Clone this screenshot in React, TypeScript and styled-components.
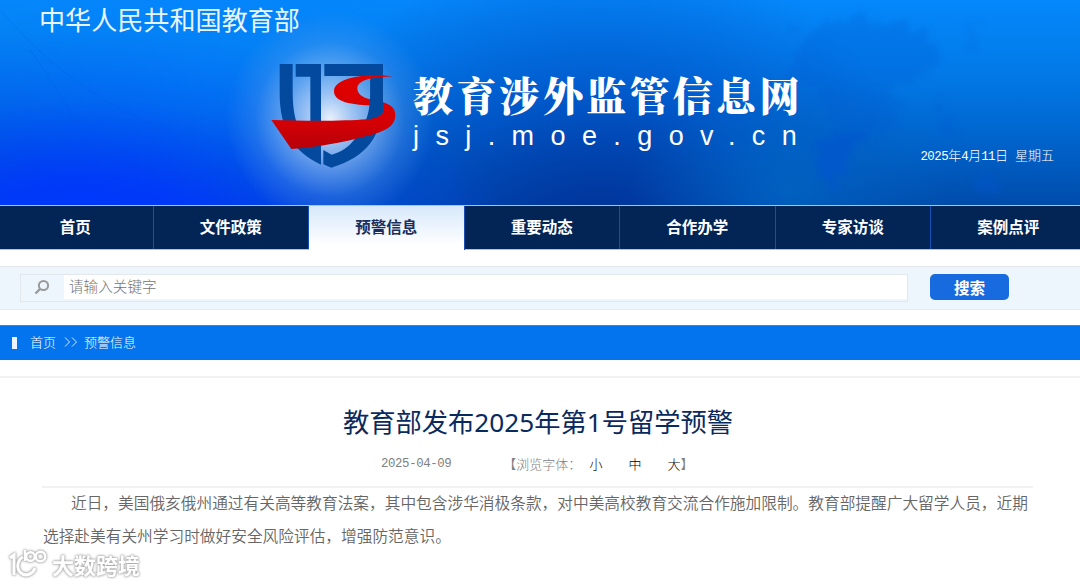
import * as React from "react";
import styled, { createGlobalStyle, css } from "styled-components";

const GlobalStyle = createGlobalStyle`
  * {
    box-sizing: border-box;
  }
  body {
    margin: 0;
    background: #ffffff;
    font-family: "Noto Sans CJK SC", sans-serif;
    overflow: hidden;
  }
`;

const Page = styled.div`
  width: 1080px;
  height: 585px;
  overflow: hidden;
  background: #ffffff;
`;

const Header = styled.header`
  position: relative;
  height: 205px;
  padding: 0 26px 0 39px;
  background:
    radial-gradient(
      ellipse 104px 108px at 330px 119px,
      rgba(245, 248, 252, 0.95) 0%,
      rgba(205, 223, 248, 0.8) 20%,
      rgba(150, 190, 240, 0.6) 45%,
      rgba(100, 160, 235, 0.28) 72%,
      rgba(60, 130, 230, 0) 100%
    ),
    radial-gradient(
      ellipse 440px 230px at 80px 260px,
      #0034ff 0%,
      rgba(0, 56, 255, 0.9) 35%,
      rgba(0, 80, 255, 0.4) 70%,
      rgba(0, 90, 255, 0) 100%
    ),
    radial-gradient(
      ellipse 160px 120px at 790px 190px,
      rgba(0, 112, 200, 0.6) 0%,
      rgba(0, 104, 196, 0) 100%
    ),
    radial-gradient(
      ellipse 330px 290px at 600px 235px,
      rgba(0, 46, 148, 0.85) 0%,
      rgba(0, 60, 180, 0.45) 50%,
      rgba(0, 80, 220, 0) 100%
    ),
    radial-gradient(
      ellipse 300px 160px at 200px 60px,
      rgba(4, 130, 250, 0.7) 0%,
      rgba(4, 130, 250, 0) 100%
    ),
    linear-gradient(to bottom, #0488fb 0%, #027ae8 35%, #0064cc 68%, #004cab 100%);
`;

const HeaderMap = styled.svg`
  position: absolute;
  inset: 0;
`;

const Ministry = styled.div`
  position: relative;
  height: 40px;
  line-height: 39px;
  font-size: 26.1px;
  color: #e8f5ff;
`;

const BrandRow = styled.div`
  position: relative;
  display: flex;
  margin-left: 211px;
  height: 150px;
`;

const BrandText = styled.div`
  margin: 27px 0 0 -17px;
  color: #ffffff;
  white-space: nowrap;
`;

const SiteName = styled.div`
  height: 52px;
  line-height: 54px;
  font-family: "Noto Serif CJK SC", "Noto Sans CJK SC", serif;
  font-size: 40px;
  font-weight: 900;
  letter-spacing: 3.3px;
`;

const SiteUrl = styled.div`
  height: 34px;
  line-height: 34px;
  font-family: "Liberation Sans", sans-serif;
  font-size: 27px;
  letter-spacing: 16.4px;
`;

const Digits = styled.span<{ $gap?: number }>`
  font-family: "Liberation Mono", monospace;
  font-size: 12.4px;
  letter-spacing: ${({ $gap = -0.5 }) => $gap}px;
`;

const Today = styled.div`
  margin-left: auto;
  align-self: flex-end;
  margin-bottom: 25px;
  height: 20px;
  line-height: 20px;
  font-size: 13px;
  font-weight: 300;
  color: #ffffff;
  white-space: pre;
`;

const Nav = styled.nav`
  display: flex;
  height: 45px;
  padding-top: 1px;
  background: #a9c4ea;
  overflow: hidden;
`;

const NavItem = styled.a<{ $active?: boolean }>`
  flex: 0 0 155.5px;
  height: 43px;
  line-height: 41px;
  text-align: center;
  font-size: 15.5px;
  font-weight: 700;
  color: #ffffff;
  background: #022556;
  border-right: 1px solid #1450b4;

  &:first-child {
    margin-left: -2px;
  }

  ${({ $active }) =>
    $active &&
    css`
      height: 44px;
      color: #1b2f5e;
      background: linear-gradient(to bottom, #d7e8fa, #ffffff 90%);
    `}
`;

const SearchBar = styled.div`
  display: flex;
  align-items: flex-start;
  margin-top: 16px;
  height: 44px;
  padding: 7px 0 0 20px;
  background: #edf5fd;
  border-top: 1px solid #e2e6ea;
  border-bottom: 1px solid #e6eaee;
`;

const SearchField = styled.div`
  display: flex;
  width: 888px;
  height: 28px;
  border: 1px solid #e3e8ed;
`;

const SearchIconCell = styled.div`
  display: flex;
  align-items: center;
  justify-content: center;
  width: 43px;
  padding: 0 2px 2px 0;
`;

const SearchInput = styled.div`
  flex: 1;
  height: 24px;
  padding-left: 5px;
  line-height: 22px;
  font-size: 14.6px;
  font-weight: 300;
  color: #757575;
  background: #ffffff;
`;

const SearchButton = styled.button`
  width: 79px;
  height: 26px;
  margin-left: 22px;
  padding: 0;
  border: none;
  border-radius: 5px;
  background: #176bdf;
  color: #ffffff;
  font-family: inherit;
  font-size: 15.6px;
  font-weight: 700;
  line-height: 26px;
`;

const Breadcrumb = styled.div`
  display: flex;
  align-items: center;
  height: 35px;
  margin-top: 15px;
  padding: 0 0 3px 12px;
  background: #0373ee;
  border-top: 1px solid #2f86e6;
  color: #ffffff;
  font-size: 13px;
  font-weight: 300;
`;

const Marker = styled.i`
  width: 5px;
  height: 12px;
  margin: 2px 13px 0 0;
  background: #eaf5ff;
`;

const Arrows = styled.svg`
  margin: 1px 6px 0 8px;
`;

const Article = styled.article`
  margin-top: 16px;
  padding: 0 46px 0 42px;
  border-top: 2px solid #f1f1f1;
`;

const Title = styled.h1`
  height: 50px;
  margin: 19px 0 0;
  line-height: 50px;
  text-align: center;
  font-family: "Noto Sans", "Noto Sans CJK SC", sans-serif;
  font-size: 26.25px;
  font-weight: 400;
  color: #0a2a5e;
`;

const Meta = styled.div`
  display: flex;
  height: 41px;
  padding-left: 339px;
  line-height: 34px;
  font-size: 13px;
  font-weight: 300;
  color: #808080;
  border-bottom: 2px solid #f1f1f1;
  width: 991px;
`;

const FontSizes = styled.div`
  display: flex;
  margin-left: 52px;
`;

const FontSizeLabel = styled.span`
  margin-right: 8px;
`;

const SizeLink = styled.a`
  width: 39px;
  color: #000000;

  &:last-of-type {
    width: 13px;
  }
`;

const Paragraph = styled.p`
  margin: -2px 0 0 1px;
  line-height: 33px;
  text-indent: 28px;
  font-size: 15.7px;
  font-weight: 350;
  color: #666666;
  white-space: nowrap;
`;

const Watermark = styled.div`
  position: absolute;
  left: 8px;
  top: 548px;
  display: flex;
  align-items: center;
  color: #ffffff;
  filter: drop-shadow(0 0 1px #a4a4a4) drop-shadow(0 0 1px #b8b8b8);
`;

const WatermarkText = styled.span`
  margin-left: 4px;
  line-height: 32px;
  font-size: 22px;
  font-weight: 700;
`;

const navItems = [
  "首页",
  "文件政策",
  "预警信息",
  "重要动态",
  "合作办学",
  "专家访谈",
  "案例点评",
];

function MapBackdrop() {
  return (
    <HeaderMap width="1080" height="205" viewBox="0 0 1080 205">
      <defs>
        <filter id="soft" x="-20%" y="-20%" width="140%" height="140%">
          <feTurbulence type="fractalNoise" baseFrequency="0.06" numOctaves="4" seed="4" result="noise" />
          <feDisplacementMap
            in="SourceGraphic"
            in2="noise"
            scale="34"
            xChannelSelector="R"
            yChannelSelector="G"
          />
          <feGaussianBlur stdDeviation="3" />
        </filter>
      </defs>
      <path
        d="M0 10C70 90 140 130 240 150M30 50C60 90 90 150 130 205"
        fill="none"
        stroke="#0050e0"
        strokeOpacity="0.2"
      />
      <g filter="url(#soft)" fill="#0054d0">
        <path
          d="M800 35C830 15 880 10 915 30C945 40 945 65 925 78L895 86L900 110L880 135L850 148L835 185L820 170L815 145L830 125L820 100L790 80Z"
          opacity="0.25"
        />
        <path d="M815 140L870 130L848 165L836 195L820 175Z" opacity="0.55" />
        <path d="M940 100L950 118L952 135L942 130Z" opacity="0.35" />
        <path d="M968 10L980 25L975 45L963 52L974 30Z" opacity="0.25" />
        <path d="M975 178L990 172L998 185L990 194L978 186Z" opacity="0.4" />
      </g>
    </HeaderMap>
  );
}

function ShieldLogo() {
  return (
    <svg width="180" height="150" viewBox="0 0 540 450">
      <defs>
        <linearGradient id="ribbon" x1="0" y1="0" x2="0" y2="1">
          <stop offset="0" stopColor="#e00000" />
          <stop offset="0.6" stopColor="#d60004" />
          <stop offset="1" stopColor="#b8000a" />
        </linearGradient>
      </defs>
      <path
        fill="#034a9f"
        d="M89 72H128V150C128 195 132 222 139 245C148 290 163 312 181 322V110H137V72H213V374C128 336 89 265 89 160Z"
      />
      <path
        fill="#034a9f"
        d="M223 72H399V170C399 290 350 350 244 383L220 373V330L245 344C275 335 295 322 312 300C350 255 361 215 361 150V108H223Z"
      />
      <path
        fill="url(#ribbon)"
        d="M428 109C350 98 252 112 252 153C252 185 300 194 361 196L361 178C335 172 322 160 322 145C324 116 375 112 428 109ZM399 187C424 194 437 207 436 227C434 262 400 275 350 288C290 305 200 322 124 327L64 240C180 244 290 243 350 238C380 234 400 226 399 210Z"
      />
      <path fill="#034a9f" d="M361 120L399 112V216C390 228 376 233 358 237L361 180Z" />
    </svg>
  );
}

function WatermarkLogo() {
  return (
    <svg width="40" height="32" viewBox="0 0 40 32" fill="none" stroke="#ffffff" strokeWidth="3">
      <path d="M2 10L6 7V27" />
      <path d="M15 9C9 12 8 21 13 25C18 29 25 26 27 20" />
      <path d="M17 2V13" strokeWidth="2.4" />
      <circle cx="22.5" cy="8.5" r="4.3" strokeWidth="2.4" />
      <circle cx="32.5" cy="8.5" r="4.8" strokeWidth="2.4" />
    </svg>
  );
}

export default function App() {
  return (
    <Page>
      <GlobalStyle />
      <Header>
        <MapBackdrop />
        <Ministry>中华人民共和国教育部</Ministry>
        <BrandRow>
          <ShieldLogo />
          <BrandText>
            <SiteName>教育涉外监管信息网</SiteName>
            <SiteUrl>jsj.moe.gov.cn</SiteUrl>
          </BrandText>
          <Today>
            <Digits>2025</Digits>年<Digits>4</Digits>月<Digits>11</Digits>日
            <Digits> </Digits>星期五
          </Today>
        </BrandRow>
      </Header>

      <Nav>
        {navItems.map((item) => (
          <NavItem key={item} $active={item === "预警信息"}>
            {item}
          </NavItem>
        ))}
      </Nav>

      <SearchBar>
        <SearchField>
          <SearchIconCell>
            <svg width="16" height="16" viewBox="0 0 16 16" fill="none" stroke="#999999">
              <circle cx="9.5" cy="6.5" r="4.6" strokeWidth="2" />
              <path d="M6 10L1.5 14.5" strokeWidth="2.4" />
            </svg>
          </SearchIconCell>
          <SearchInput>请输入关键字</SearchInput>
        </SearchField>
        <SearchButton>搜索</SearchButton>
      </SearchBar>

      <Breadcrumb>
        <Marker />
        <span>首页</span>
        <Arrows width="14" height="10" viewBox="0 0 14 10" fill="none" stroke="#d8ecff">
          <path d="M1 0.5L5.5 5L1 9.5M8 0.5L12.5 5L8 9.5" />
        </Arrows>
        <span>预警信息</span>
      </Breadcrumb>

      <Article>
        <Title>教育部发布2025年第1号留学预警</Title>
        <Meta>
          <Digits $gap={-0.4}>2025-04-09</Digits>
          <FontSizes>
            <FontSizeLabel>【浏览字体：</FontSizeLabel>
            <SizeLink>小</SizeLink>
            <SizeLink>中</SizeLink>
            <SizeLink>大</SizeLink>
            <span>】</span>
          </FontSizes>
        </Meta>
        <Paragraph>
          近日，美国俄亥俄州通过有关高等教育法案，其中包含涉华消极条款，对中美高校教育交流合作施加限制。教育部提醒广大留学人员，近期
          <br />
          选择赴美有关州学习时做好安全风险评估，增强防范意识。
        </Paragraph>
      </Article>

      <Watermark>
        <WatermarkLogo />
        <WatermarkText>大数跨境</WatermarkText>
      </Watermark>
    </Page>
  );
}
